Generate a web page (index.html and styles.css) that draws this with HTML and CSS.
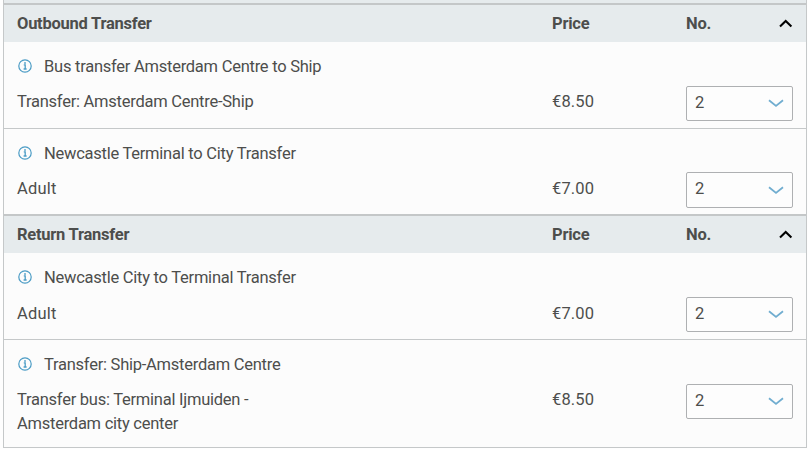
FILE: index.html
```
<!DOCTYPE html>
<html lang="en">
<head>
  <meta charset="UTF-8">
  <title>Transfers</title>
  <link rel="stylesheet" href="styles.css">
</head>
<body>
  <!-- shared icons -->
  <svg class="sprite" width="0" height="0">
    <symbol id="info" viewBox="0 0 14 14">
      <circle cx="7" cy="7" r="6.2" fill="none" stroke="currentColor" stroke-width="1.2"/>
      <path d="M5.8 5.9H7.2V10M5.6 10H8.6" fill="none" stroke="currentColor" stroke-width="1.3"/>
      <rect x="6.2" y="3.2" width="1.6" height="1.6" fill="currentColor"/>
    </symbol>
    <symbol id="up" viewBox="0 0 14 9">
      <path d="M1 7.4L6.7 2L12.4 7.4" fill="none" stroke="currentColor" stroke-width="2.1"/>
    </symbol>
    <symbol id="down" viewBox="0 0 16 9">
      <path d="M1 1.2L8 6.9L15 1.2" fill="none" stroke="currentColor" stroke-width="1.8"/>
    </symbol>
  </svg>

  <div class="transfers">
    <!-- Outbound -->
    <div class="group-header">
      <span>Outbound Transfer</span>
      <span>Price</span>
      <span>No.</span>
      <svg class="toggle"><use href="#up"/></svg>
    </div>
    <div class="item">
      <div class="title"><svg class="info"><use href="#info"/></svg><span>Bus transfer Amsterdam Centre to Ship</span></div>
      <div class="line">
        <span class="label">Transfer: Amsterdam Centre-Ship</span>
        <span class="price">€8.50</span>
        <div class="picker"><select><option>2</option></select><svg class="arrow"><use href="#down"/></svg></div>
      </div>
    </div>
    <div class="item item-short">
      <div class="title"><svg class="info"><use href="#info"/></svg><span>Newcastle Terminal to City Transfer</span></div>
      <div class="line">
        <span class="label adult">Adult</span>
        <span class="price">€7.00</span>
        <div class="picker"><select><option>2</option></select><svg class="arrow"><use href="#down"/></svg></div>
      </div>
    </div>

    <!-- Return -->
    <div class="group-header">
      <span>Return Transfer</span>
      <span>Price</span>
      <span>No.</span>
      <svg class="toggle"><use href="#up"/></svg>
    </div>
    <div class="item item-low">
      <div class="title"><svg class="info"><use href="#info"/></svg><span>Newcastle City to Terminal Transfer</span></div>
      <div class="line">
        <span class="label adult">Adult</span>
        <span class="price">€7.00</span>
        <div class="picker"><select><option>2</option></select><svg class="arrow"><use href="#down"/></svg></div>
      </div>
    </div>
    <div class="item item-tall">
      <div class="title"><svg class="info"><use href="#info"/></svg><span>Transfer: Ship-Amsterdam Centre</span></div>
      <div class="line">
        <span class="label">Transfer bus: Terminal Ijmuiden -<br>Amsterdam city center</span>
        <span class="price">€8.50</span>
        <div class="picker"><select><option>2</option></select><svg class="arrow"><use href="#down"/></svg></div>
      </div>
    </div>
  </div>
</body>
</html>
```
FILE: styles.css
```
* {
  box-sizing: border-box;
}

body {
  margin: 0;
  background: #fefefe;
  font-family: Roboto, sans-serif;
  font-size: 16.5px;
  line-height: 24px;
  letter-spacing: -0.25px;
  color: #4d4e4c;
  overflow: hidden;
  white-space: nowrap;
}

.sprite {
  position: absolute;
}

.transfers {
  width: 804px;
  height: 448px;
  margin-left: 3px;
  padding-top: 3px;
  background: #e6ebed;
  border: 1px solid #c5c8c9;
  border-top: 0;
}

.group-header,
.line {
  display: grid;
  grid-template-columns: 535px 134px 107px;
  padding-left: 13px;
}

.group-header {
  grid-template-columns: 535px 134px 93px 14px;
  align-items: center;
  height: 39px;
  border-top: 2px solid #c4c7c8;
  background: #e6ebed;
  font-weight: bold;
}

.toggle {
  width: 14px;
  height: 9px;
  color: #000;
}

.item {
  height: 86px;
  padding-top: 12px;
  background: #fcfcfc;
}

.item + .item {
  height: 87px;
  border-top: 1px solid #c5c8c9;
}

.item + .item-short {
  height: 86px;
}

.item + .item-tall {
  height: 108px;
}

.title {
  display: flex;
  align-items: center;
  height: 24px;
  padding-left: 14px;
}

.title span {
  padding-top: 2px;
}

.info {
  width: 14px;
  height: 14px;
  margin-right: 12px;
  color: #4b9cc5;
}

.line {
  align-items: start;
  margin-top: 8px;
}

.label,
.price {
  padding-top: 4px;
}

.adult {
  letter-spacing: 0.2px;
}

.price {
  letter-spacing: 0.15px;
}

.item-short .line {
  margin-top: 7px;
}

.item-short .label,
.item-short .price,
.item-low .label,
.item-low .price {
  padding-top: 5px;
}

.picker {
  display: grid;
  align-items: center;
  height: 35px;
}

.item-short .picker {
  height: 36px;
}

.picker select,
.arrow {
  grid-area: 1 / 1;
}

.picker select {
  appearance: none;
  width: 107px;
  height: 100%;
  margin: 0;
  padding: 0 8px 2px;
  border: 1px solid #aeb0b2;
  border-radius: 2px;
  background: #fdfdfd;
  font: inherit;
  color: inherit;
}

.arrow {
  justify-self: end;
  width: 16px;
  height: 9px;
  margin-right: 9px;
  color: #70add0;
  pointer-events: none;
}
```
